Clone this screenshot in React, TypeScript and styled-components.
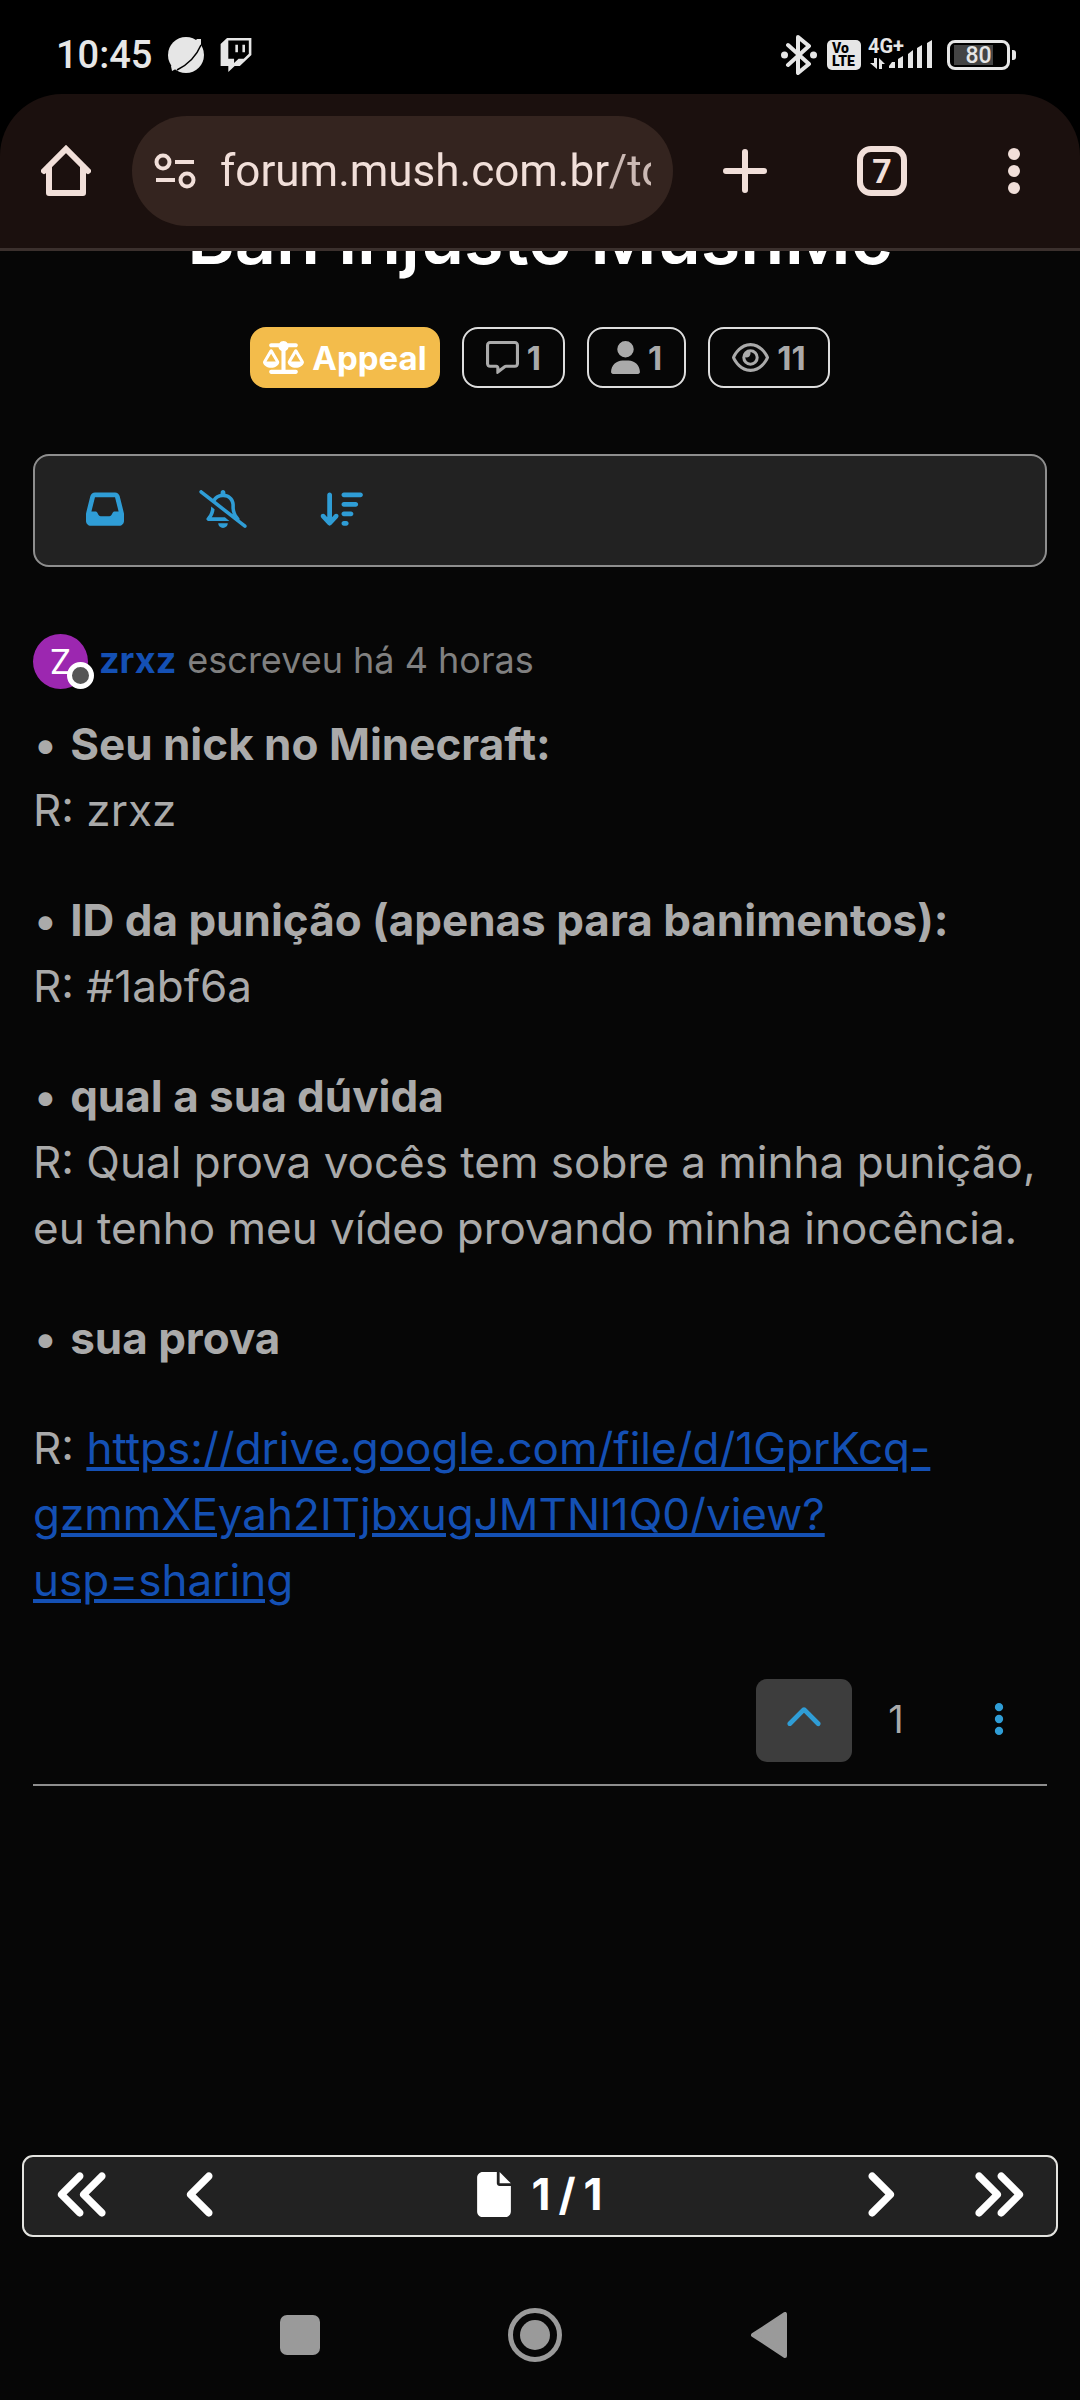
import React from "react";
import styled, { createGlobalStyle } from "styled-components";
import {
  FaTwitch,
  FaScaleBalanced,
  FaRegMessage,
  FaUser,
  FaRegEye,
  FaInbox,
  FaRegBellSlash,
  FaArrowDownWideShort,
  FaChevronUp,
  FaEllipsisVertical,
  FaAnglesLeft,
  FaAnglesRight,
  FaAngleLeft,
  FaAngleRight,
  FaFile,
} from "react-icons/fa6";

const sans = `Inter, "Noto Sans", sans-serif`;
const system = `Roboto, "Noto Sans", sans-serif`;

const GlobalStyle = createGlobalStyle`
  * { box-sizing: border-box; }
  body { margin: 0; background: #060606; }
  button { border: 0; padding: 0; background: none; cursor: pointer; }
  svg { display: block; flex: none; }
`;

const Screen = styled.div`
  min-height: 100vh;
  display: flex;
  flex-direction: column;
  background: #060606;
  color: #aaaaaa;
  font-family: ${sans};
`;

const Glyph = styled.span<{ $width: number; $height: number }>`
  flex: none;
  svg {
    width: ${(p) => p.$width}px;
    height: ${(p) => p.$height}px;
  }
`;

const ChromeArea = styled.header`
  background: #000000;
  font-family: ${system};
`;

const StatusBar = styled.div`
  height: 94px;
  padding: 15px 64px 0 56px;
  display: flex;
  align-items: center;
  color: #e6e6e6;
`;

const Clock = styled.time`
  font-size: 38px;
  font-weight: 500;
  line-height: 44px;
`;

const StatusGroup = styled.div<{ $gap: number; $push?: boolean }>`
  display: flex;
  align-items: center;
  gap: ${(p) => p.$gap}px;
  margin-left: ${(p) => (p.$push ? "auto" : "16px")};
`;

const VolteBadge = styled.span`
  width: 34px;
  height: 30px;
  padding-left: 5px;
  border-radius: 5px;
  background: #e6e6e6;
  color: #000000;
  font-size: 14px;
  font-weight: 900;
  line-height: 13px;
  display: flex;
  flex-direction: column;
  justify-content: center;
`;

const Battery = styled.span`
  display: flex;
  align-items: center;
  gap: 2px;
  &::after {
    content: "";
    width: 4px;
    height: 10px;
    border-radius: 0 3px 3px 0;
    background: #e6e6e6;
  }
`;

const BatteryBody = styled.span`
  width: 63px;
  height: 30px;
  border: 3px solid #e6e6e6;
  border-radius: 8px;
  padding: 2px 4px;
  display: flex;
`;

const BatteryLevel = styled.span`
  width: 100%;
  background: linear-gradient(90deg, #444444 80%, transparent 80%);
  font-size: 23px;
  font-weight: 500;
  line-height: 21px;
  text-align: center;
`;

const BrowserBar = styled.div`
  height: 157px;
  padding-left: 16px;
  border-bottom: 3px solid #3b302d;
  border-radius: 62px 62px 0 0;
  background: #1b100e;
  display: flex;
  align-items: center;
`;

const ChromeButton = styled.button<{ $width: number }>`
  width: ${(p) => p.$width}px;
  height: 110px;
  display: flex;
  align-items: center;
  justify-content: center;
  color: #f1dfd9;
`;

const AddressBar = styled.label`
  flex: 1;
  min-width: 0;
  height: 110px;
  margin-left: 16px;
  padding: 0 22px;
  border-radius: 55px;
  background: #34241f;
  display: flex;
  align-items: center;
  gap: 24px;
`;

const Address = styled.input`
  flex: 1;
  min-width: 0;
  height: 64px;
  padding: 0;
  border: 0;
  outline: 0;
  background: none;
  color: #f1dfd9;
  font-family: ${system};
  font-size: 44px;
  mask-image: linear-gradient(90deg, #000 90%, rgba(0, 0, 0, 0.8) 91%);
`;

const TabCount = styled.span`
  width: 50px;
  height: 50px;
  border: 6px solid #f1dfd9;
  border-radius: 14px;
  display: flex;
  align-items: center;
  justify-content: center;
  font-family: ${system};
  font-size: 34px;
  font-weight: 700;
  line-height: 38px;
`;

const Topic = styled.main`
  flex: 1;
  padding: 0 33px;
  overflow: hidden;
`;

const Title = styled.h1`
  margin: -46px 0 0;
  color: #ffffff;
  font-size: 72px;
  font-weight: 600;
  line-height: 66px;
  text-align: center;
`;

const Badges = styled.div`
  margin-top: 56px;
  display: flex;
  justify-content: center;
  gap: 22px;
`;

const Badge = styled.span<{ $filled?: boolean }>`
  height: 61px;
  padding: 0 ${(p) => (p.$filled ? 11 : 22)}px;
  border: 2px solid ${(p) => (p.$filled ? "#f3bc4b" : "#dddddd")};
  border-radius: 16px;
  background: ${(p) => (p.$filled ? "#f3bc4b" : "transparent")};
  color: ${(p) => (p.$filled ? "#ffffff" : "#aaaaaa")};
  display: flex;
  align-items: center;
  gap: 8px;
  font-size: 33px;
  font-weight: 700;
`;

const Tools = styled.div`
  height: 113px;
  margin-top: 66px;
  padding: 0 22px;
  border: 2px solid #8e8e8e;
  border-radius: 16px;
  background: #222222;
  display: flex;
  align-items: center;
  gap: 22px;
`;

const ToolButton = styled.button<{ $active?: boolean }>`
  width: 96px;
  height: 83px;
  padding-bottom: 4px;
  border-radius: 11px;
  background: ${(p) => (p.$active ? "#3d3d3d" : "transparent")};
  color: #2f9dd6;
  display: flex;
  align-items: center;
  justify-content: center;
`;

const Author = styled.div`
  height: 55px;
  margin-top: 67px;
  display: flex;
  align-items: center;
  color: #808080;
  font-size: 36px;
  line-height: 52px;
`;

const Avatar = styled.span`
  position: relative;
  width: 55px;
  height: 55px;
  margin-right: 11px;
  border-radius: 50%;
  background: #9c27b0;
  color: #ffffff;
  display: flex;
  align-items: center;
  justify-content: center;
  font-size: 34px;
`;

const Presence = styled.span`
  position: absolute;
  right: -6px;
  bottom: 0;
  width: 27px;
  height: 27px;
  border: 5px solid #ffffff;
  border-radius: 50%;
  background: #555555;
`;

const AuthorLine = styled.span`
  padding-bottom: 3px;
  display: flex;
  gap: 11px;
`;

const AuthorName = styled.a`
  color: #1450b4;
  font-weight: 700;
  text-decoration: none;
`;

const Post = styled.article`
  margin-top: 22px;
  font-size: 44px;
  line-height: 66px;
  p { margin: 0 0 44px; }
  strong { font-weight: 700; }
  a { color: #1450b4; }
`;

const PostFooter = styled.footer`
  margin-top: 66px;
  padding-bottom: 22px;
  border-bottom: 2px solid #8e8e8e;
  display: flex;
  align-items: center;
  justify-content: flex-end;
`;

const Votes = styled.span`
  width: 88px;
  margin-right: 11px;
  padding-bottom: 4px;
  font-size: 38px;
  text-align: center;
`;

const Pagination = styled.nav`
  height: 82px;
  margin: 0 22px 44px;
  padding: 0 11px 4px;
  border: 2px solid #e4e4e0;
  border-radius: 11px;
  background: #222222;
  color: #ffffff;
  display: flex;
  align-items: center;
  justify-content: space-between;
`;

const PageButtons = styled.div`
  display: flex;
  gap: 22px;
`;

const PageButton = styled.button`
  width: 96px;
  height: 74px;
  color: #ffffff;
  display: flex;
  align-items: center;
  justify-content: center;
`;

const PageCount = styled.span`
  display: flex;
  align-items: center;
  gap: 20px;
  font-size: 44px;
  font-weight: 700;
  line-height: 66px;
`;

const PageNumbers = styled.span`
  display: flex;
  gap: 8px;
`;

const SystemNav = styled.nav`
  height: 119px;
  padding: 0 243px 11px 232px;
  display: flex;
  justify-content: space-between;
  align-items: center;
  color: #9a9a9a;
`;

const SystemButton = styled.button`
  width: 136px;
  height: 88px;
  color: inherit;
  display: flex;
  align-items: center;
  justify-content: center;
`;

const questions = [
  { title: "Seu nick no Minecraft:", answer: "R: zrxz" },
  { title: "ID da punição (apenas para banimentos):", answer: "R: #1abf6a" },
  {
    title: "qual a sua dúvida",
    answer: "R: Qual prova vocês tem sobre a minha punição, eu tenho meu vídeo provando minha inocência.",
  },
];

function PlanetIcon() {
  return (
    <svg width="36" height="38" viewBox="0 0 36 38">
      <circle cx="18" cy="19" r="18" fill="#e6e6e6" />
      <path d="M4 35 L3 30 L29 3 L33 3 L33 8 C27 20 17 29 4 35Z" fill="#e6e6e6" />
      <path d="M9 34 C19 29 28 21 33 9" fill="none" stroke="#000" strokeWidth="1.500" />
    </svg>
  );
}

function BluetoothIcon() {
  return (
    <svg width="40" height="40" viewBox="-1 0 40 40" fill="none" stroke="#e6e6e6" strokeWidth="4" strokeLinejoin="round" strokeLinecap="round">
      <path d="M7 10 L28 29 L17 38 V2 L28 11 L7 30" />
      <circle cx="3.500" cy="20" r="3.500" fill="#e6e6e6" stroke="none" />
      <circle cx="32.500" cy="20" r="3.500" fill="#e6e6e6" stroke="none" />
    </svg>
  );
}

function SignalIcon() {
  return (
    <svg width="72" height="46" viewBox="0 -6 72 46" fill="#e6e6e6">
      <text x="0" y="15" fontFamily="Roboto, sans-serif" fontSize="20" fontWeight="700">4G+</text>
      <path d="M6 20h3v11l-7-6h4zM11 31V20l6 6h-3v5z" />
      <path d="M21 30v-2l3-4h3v6zM30 30v-9l5-3v12zM40 30V16l5-4v18zM49 30V10l5-3v23zM59 30V5l5-3v28z" />
    </svg>
  );
}

function HomeIcon() {
  return (
    <svg width="50" height="52" viewBox="0 0 50 52" fill="none" stroke="#f1dfd9" strokeWidth="6" strokeLinejoin="round" strokeLinecap="round">
      <path d="M3 26 L25 4 L47 26" strokeLinejoin="miter" />
      <path d="M8 22 V48 H42 V22" />
    </svg>
  );
}

function SiteControlsIcon() {
  return (
    <svg width="42" height="36" viewBox="0 0 42 36" fill="none" stroke="#f1dfd9" strokeWidth="4">
      <circle cx="9" cy="9" r="6.500" />
      <circle cx="33" cy="27" r="6.500" />
      <path d="M21 9 H40 M2 27 H21" />
    </svg>
  );
}

export default function App() {
  return (
    <Screen>
      <GlobalStyle />
      <ChromeArea>
        <StatusBar>
          <Clock>10:45</Clock>
          <StatusGroup $gap={15}>
            <PlanetIcon />
            <FaTwitch size={34} />
          </StatusGroup>
          <StatusGroup $gap={7} $push>
            <BluetoothIcon />
            <VolteBadge>
              <span>Vo</span>
              <span>LTE</span>
            </VolteBadge>
            <SignalIcon />
            <Battery>
              <BatteryBody>
                <BatteryLevel>80</BatteryLevel>
              </BatteryBody>
            </Battery>
          </StatusGroup>
        </StatusBar>
        <BrowserBar>
          <ChromeButton $width={100} aria-label="Página inicial">
            <HomeIcon />
          </ChromeButton>
          <AddressBar>
            <SiteControlsIcon />
            <Address type="text" aria-label="Endereço" defaultValue="forum.mush.com.br/to" />
          </AddressBar>
          <ChromeButton $width={144} aria-label="Nova guia">
            <svg width="44" height="44" viewBox="0 0 44 44" stroke="#f1dfd9" strokeWidth="6" strokeLinecap="round">
              <path d="M22 3V41M3 22H41" />
            </svg>
          </ChromeButton>
          <ChromeButton $width={130} aria-label="Guias abertas">
            <TabCount>7</TabCount>
          </ChromeButton>
          <ChromeButton $width={133} aria-label="Mais opções">
            <svg width="12" height="46" viewBox="0 0 12 46" fill="#f1dfd9">
              <circle cx="6" cy="6" r="6" />
              <circle cx="6" cy="23" r="6" />
              <circle cx="6" cy="40" r="6" />
            </svg>
          </ChromeButton>
        </BrowserBar>
      </ChromeArea>

      <Topic>
        <Title>Ban injusto MushMc</Title>
        <Badges>
          <Badge $filled>
            <Glyph $width={41} $height={33}>
              <FaScaleBalanced />
            </Glyph>
            Appeal
          </Badge>
          <Badge>
            <Glyph $width={33} $height={33}>
              <FaRegMessage />
            </Glyph>
            1
          </Badge>
          <Badge>
            <Glyph $width={29} $height={33}>
              <FaUser />
            </Glyph>
            1
          </Badge>
          <Badge>
            <Glyph $width={37} $height={33}>
              <FaRegEye />
            </Glyph>
            11
          </Badge>
        </Badges>

        <Tools>
          <ToolButton aria-label="Caixa de entrada">
            <Glyph $width={38} $height={38}>
              <FaInbox />
            </Glyph>
          </ToolButton>
          <ToolButton aria-label="Não seguir">
            <Glyph $width={48} $height={38}>
              <FaRegBellSlash />
            </Glyph>
          </ToolButton>
          <ToolButton aria-label="Ordenar">
            <Glyph $width={43} $height={38}>
              <FaArrowDownWideShort />
            </Glyph>
          </ToolButton>
        </Tools>

        <Author>
          <Avatar>
            Z
            <Presence />
          </Avatar>
          <AuthorLine>
            <AuthorName href="#zrxz">zrxz</AuthorName>
            <span>escreveu há 4 horas</span>
          </AuthorLine>
        </Author>

        <Post>
          {questions.map((q) => (
            <p key={q.title}>
              • <strong>{q.title}</strong>
              <br />
              {q.answer}
            </p>
          ))}
          <p>
            • <strong>sua prova</strong>
          </p>
          <p>
            R:{" "}
            <a href="https://drive.google.com/file/d/1GprKcq-gzmmXEyah2ITjbxugJMTNl1Q0/view?usp=sharing">
              https://drive.google.com/file/d/1GprKcq-gzmmXEyah2ITjbxugJMTNl1Q0/view?usp=sharing
            </a>
          </p>
        </Post>

        <PostFooter>
          <ToolButton $active aria-label="Votar a favor">
            <Glyph $width={38} $height={38}>
              <FaChevronUp />
            </Glyph>
          </ToolButton>
          <Votes>1</Votes>
          <ToolButton aria-label="Opções da mensagem">
            <FaEllipsisVertical size={38} />
          </ToolButton>
        </PostFooter>
      </Topic>

      <Pagination aria-label="Paginação">
        <PageButtons>
          <PageButton aria-label="Primeira página">
            <FaAnglesLeft size={59} />
          </PageButton>
          <PageButton aria-label="Página anterior">
            <FaAngleLeft size={59} />
          </PageButton>
        </PageButtons>
        <PageCount>
          <Glyph $width={34} $height={45}>
            <FaFile />
          </Glyph>
          <PageNumbers>
            <span>1</span>
            <span>/</span>
            <span>1</span>
          </PageNumbers>
        </PageCount>
        <PageButtons>
          <PageButton aria-label="Próxima página">
            <FaAngleRight size={59} />
          </PageButton>
          <PageButton aria-label="Última página">
            <FaAnglesRight size={59} />
          </PageButton>
        </PageButtons>
      </Pagination>

      <SystemNav aria-label="Navegação do sistema">
        <SystemButton aria-label="Recentes">
          <svg width="40" height="40" viewBox="0 0 40 40" fill="currentColor">
            <rect width="40" height="40" rx="7" />
          </svg>
        </SystemButton>
        <SystemButton aria-label="Início">
          <svg width="54" height="54" viewBox="0 0 54 54" fill="currentColor">
            <circle cx="27" cy="27" r="24.500" fill="none" stroke="currentColor" strokeWidth="5" />
            <circle cx="27" cy="27" r="15" />
          </svg>
        </SystemButton>
        <SystemButton aria-label="Voltar">
          <svg width="36" height="46" viewBox="0 0 36 46" fill="currentColor" stroke="currentColor" strokeWidth="4" strokeLinejoin="round">
            <path d="M34 2V44L2 23Z" />
          </svg>
        </SystemButton>
      </SystemNav>
    </Screen>
  );
}
